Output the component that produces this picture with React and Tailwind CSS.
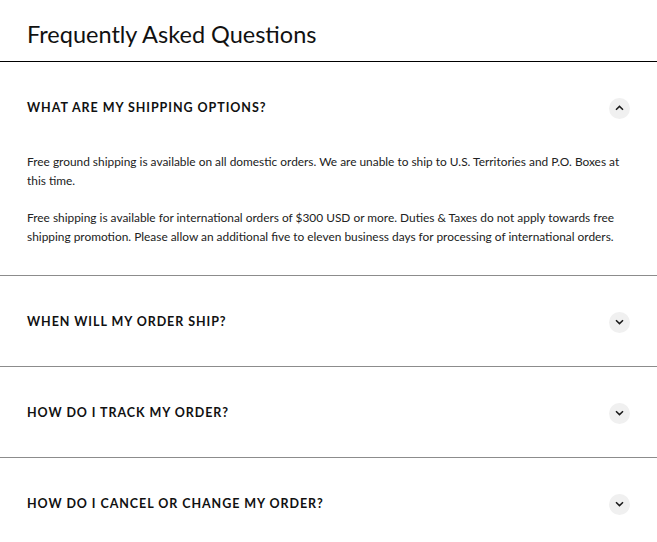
import { useState } from 'react'

const faqs = [
  {
    q: 'What are my shipping options?',
    a: [
      'Free ground shipping is available on all domestic orders. We are unable to ship to U.S. Territories and P.O. Boxes at this time.',
      'Free shipping is available for international orders of $300 USD or more. Duties & Taxes do not apply towards free shipping promotion. Please allow an additional five to eleven business days for processing of international orders.',
    ],
  },
  { q: 'When will my order ship?', a: ['Orders placed before 12 PM EST ship the same business day.'] },
  { q: 'How do I track my order?', a: ['A tracking number will be emailed to you once your order ships.'] },
  { q: 'How do I cancel or change my order?', a: ['Please contact us within one hour of placing your order.'] },
]

function Chevron({ open }) {
  return (
    <span className="flex h-[21px] w-[21px] items-center justify-center rounded-full bg-[#f0f0f0]">
      <svg width="9" height="6" viewBox="0 0 9 6" fill="none" className={open ? 'rotate-180' : ''}>
        <path d="M1 1.2L4.5 4.6L8 1.2" stroke="#1a1a1a" strokeWidth="1.5" />
      </svg>
    </span>
  )
}

export default function App() {
  const [open, setOpen] = useState(0)

  return (
    <div className="min-h-screen bg-white text-[#111] font-['Lato','Liberation_Sans',sans-serif]">
      <h1 className="border-b border-black px-[27px] pt-[19px] pb-[11px] text-[23.5px] leading-[31px] font-normal">
        Frequently Asked Questions
      </h1>

      {faqs.map((item, i) => (
        <div key={item.q} className={i > 0 ? 'border-t border-[#8c8c8c]' : ''}>
          <button
            type="button"
            onClick={() => setOpen(open === i ? null : i)}
            className="flex h-[90px] w-full items-center justify-between px-[27px] pt-[2px] text-left"
          >
            <span className="text-[12.5px] font-bold uppercase tracking-[0.075em]">{item.q}</span>
            <Chevron open={open === i} />
          </button>
          {open === i && (
            <div className="flex flex-col gap-[18px] px-[27px] pb-[29px] text-[11.9px] leading-[19px] text-[#222]">
              {item.a.map((p) => (
                <p key={p}>{p}</p>
              ))}
            </div>
          )}
        </div>
      ))}
    </div>
  )
}
